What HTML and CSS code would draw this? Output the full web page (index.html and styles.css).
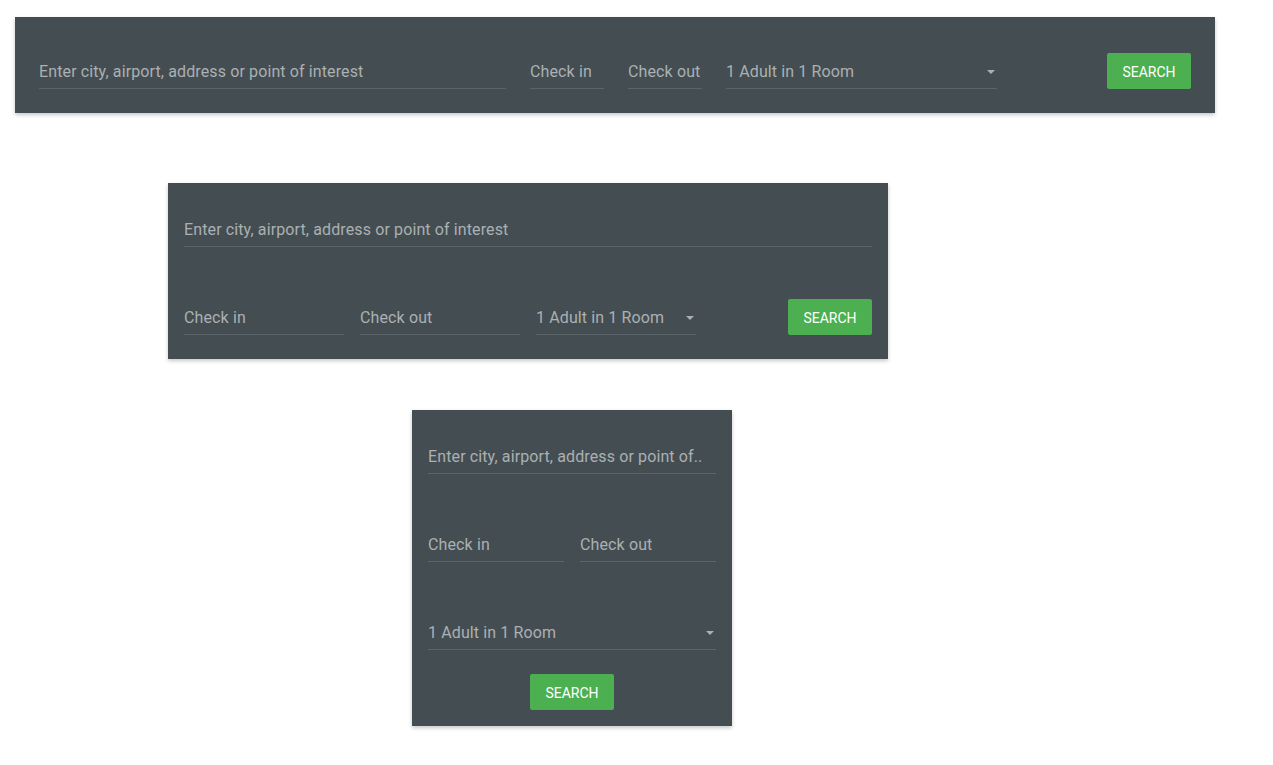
FILE: index.html
```html
<!DOCTYPE html>
<html lang="en">
<head>
<meta charset="utf-8">
<title>Hotel search</title>
<link rel="stylesheet" href="styles.css">
</head>
<body>
  <form class="panel panel-wide">
    <div class="field dest-wide">Enter city, airport, address or point of interest</div>
    <div class="field date-wide">Check in</div>
    <div class="field date-wide">Check out</div>
    <div class="field select guests-wide"><span>1 Adult in 1 Room</span><i class="caret"></i></div>
    <button type="button" class="btn btn-end">SEARCH</button>
  </form>

  <form class="panel panel-mid">
    <div class="field">Enter city, airport, address or point of interest</div>
    <div class="row">
      <div class="field col-160">Check in</div>
      <div class="field col-160">Check out</div>
      <div class="field select col-160"><span>1 Adult in 1 Room</span><i class="caret"></i></div>
      <button type="button" class="btn btn-end">SEARCH</button>
    </div>
  </form>

  <form class="panel panel-narrow">
    <div class="field">Enter city, airport, address or point of..</div>
    <div class="row">
      <div class="field grow">Check in</div>
      <div class="field grow">Check out</div>
    </div>
    <div class="field select"><span>1 Adult in 1 Room</span><i class="caret"></i></div>
    <button type="button" class="btn btn-center">SEARCH</button>
  </form>
</body>
</html>
```

FILE: styles.css
```css
html, body {
  margin: 0;
  padding: 0;
  background: #ffffff;
}

body {
  font-family: Roboto, "Noto Sans", "Liberation Sans", sans-serif;
  padding-top: 17px;
  padding-bottom: 20px;
}

.panel {
  box-sizing: border-box;
  background: #434d52;
  box-shadow: 0 2px 4px rgba(0, 0, 0, 0.22);
  margin: 0;
}

.panel-wide {
  width: 1200px;
  margin-left: 15px;
  padding: 36px 24px 24px;
  display: flex;
  align-items: flex-end;
  gap: 24px;
}

.panel-mid {
  width: 720px;
  margin-left: 168px;
  margin-top: 70px;
  padding: 28px 16px 24px;
  display: flex;
  flex-direction: column;
  gap: 52px;
}

.panel-narrow {
  width: 320px;
  margin-left: 412px;
  margin-top: 51px;
  padding: 28px 16px 16px;
  display: flex;
  flex-direction: column;
  gap: 52px;
}

.row {
  display: flex;
  align-items: flex-end;
  gap: 16px;
}

.field {
  box-sizing: border-box;
  height: 36px;
  padding-top: 2px;
  display: flex;
  align-items: center;
  justify-content: space-between;
  border-bottom: 1px solid rgba(255, 255, 255, 0.13);
  color: rgba(255, 255, 255, 0.56);
  font-size: 16px;
  letter-spacing: 0.12px;
  white-space: nowrap;
  overflow: hidden;
}

.dest-wide { flex: 0 0 467px; }
.date-wide { flex: 0 0 74px; }
.guests-wide { flex: 0 0 271px; }
.col-160 { flex: 0 0 160px; }
.grow { flex: 1 1 0; }

.caret {
  width: 0;
  height: 0;
  border-left: 4px solid transparent;
  border-right: 4px solid transparent;
  border-top: 4px solid rgba(255, 255, 255, 0.56);
  margin-right: 2px;
  margin-top: 0;
}

.btn {
  box-sizing: border-box;
  width: 84px;
  height: 36px;
  border: none;
  border-radius: 2px;
  background: #4caf50;
  color: #ffffff;
  font-family: Roboto, "Noto Sans", "Liberation Sans", sans-serif;
  font-size: 14px;
  font-weight: 400;
  padding: 2px 0 0;
  cursor: pointer;
}

.btn-end { margin-left: auto; }

.panel-narrow .btn-center {
  align-self: center;
  margin-top: -28px;
}
```
